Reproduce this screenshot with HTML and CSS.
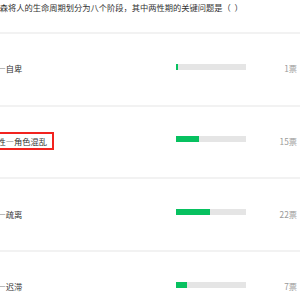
FILE: index.html
```html
<!DOCTYPE html>
<html lang="zh-CN">
<head>
    <meta charset="UTF-8" />
    <title>投票结果</title>
    <meta name="viewport" content="width=device-width, initial-scale=1" />
    <link rel="stylesheet" href="styles.css">
</head>
<body>
    <div class="poll">
        <p class="question">埃里克森将人的生命周期划分为八个阶段，其中两性期的关键问题是（&nbsp;&nbsp;）</p>

        <div class="option">
            <div class="label"><span>勤奋—自卑</span></div>
            <div class="track"><div class="fill" style="width: 2.2%"></div></div>
            <div class="count">1票</div>
        </div>
        <div class="option">
            <div class="label"><span class="picked">同一性—角色混乱</span></div>
            <div class="track"><div class="fill" style="width: 33.3%"></div></div>
            <div class="count">15票</div>
        </div>
        <div class="option">
            <div class="label"><span>亲密—疏离</span></div>
            <div class="track"><div class="fill" style="width: 48.9%"></div></div>
            <div class="count">22票</div>
        </div>
        <div class="option">
            <div class="label"><span>繁殖—迟滞</span></div>
            <div class="track"><div class="fill" style="width: 15.6%"></div></div>
            <div class="count">7票</div>
        </div>
    </div>
</body>
</html>
```
FILE: styles.css
```css
body {
    margin: 0;
    background-color: #ffffff;
    font-family: "Noto Sans CJK SC", "Noto Sans", sans-serif;
    font-size: 8.25px;
    color: #333;
    overflow: hidden;
}

.poll {
    margin-left: -19px;
}

.question {
    margin: 0 0 0 -6px;
    padding: 0 0 17px;
    line-height: 15px;
    color: #333;
    white-space: nowrap;
}

.option {
    display: grid;
    grid-template-columns: 1fr 70px 51px;
    align-items: center;
    box-sizing: border-box;
    height: 72.67px;
    padding: 0 3px 2px 0;
    border-top: 2px solid #f2f2f2;
}

    .option .label {
        line-height: 12px;
        white-space: nowrap;
    }

        .option .label span {
            display: inline-block;
        }

        .option .label .picked {
            padding: 0 4px;
            margin: 0 -4px;
            outline: 2px solid #f2231f;
            outline-offset: 1.5px;
        }

.track {
    height: 6px;
    margin-bottom: 3px;
    background-color: #e5e5e5;
}

    .track .fill {
        height: 100%;
        background-color: #07c160;
    }

.count {
    text-align: right;
    line-height: 12px;
    color: #999;
}
```
